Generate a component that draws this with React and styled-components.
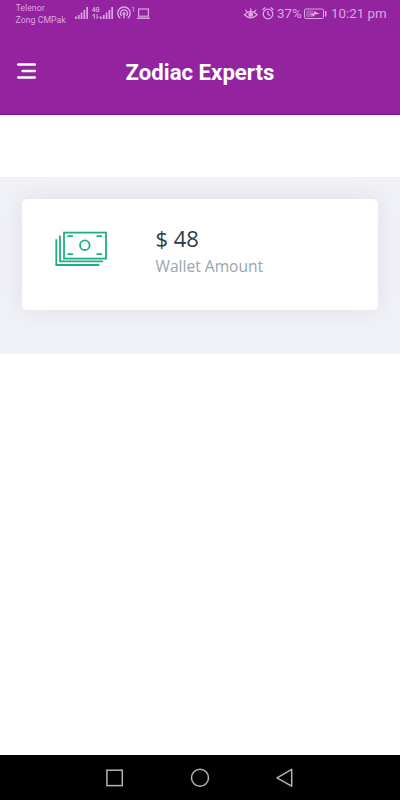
import React from 'react';
import styled, { createGlobalStyle } from 'styled-components';

const GlobalStyle = createGlobalStyle`
  * { box-sizing: border-box; }
  body { margin: 0; background: #fff; }
`;

const Screen = styled.div`
  display: flex;
  flex-direction: column;
  width: 400px;
  height: 800px;
  overflow: hidden;
  background: #fff;
  font-family: Roboto, sans-serif;
`;

const TopArea = styled.header`
  height: 115px;
  flex: none;
  background: #93239f;
  border-bottom: 1px solid #7c1488;
`;

const StatusBar = styled.div`
  display: flex;
  align-items: flex-start;
  justify-content: space-between;
  height: 28px;
  padding: 0 14px 0 15px;
  color: #dda5e3;
`;

const StatusGroup = styled.div`
  display: flex;
  align-items: flex-start;
`;

const Carriers = styled.div`
  width: 60px;
  padding: 2px 0 0 0.5px;
  font-size: 8.8px;
  line-height: 12px;
  white-space: nowrap;
`;

const StatusIcon = styled.svg`
  display: block;
  flex: none;
  width: ${(p) => p.$w}px;
  height: 28px;
  margin-right: ${(p) => p.$gap || 0}px;
  overflow: visible;
`;

const StatusText = styled.span`
  width: ${(p) => p.$w}px;
  margin-right: ${(p) => p.$gap || 0}px;
  font-size: 13.3px;
  line-height: 28px;
  white-space: nowrap;
`;

const NetworkType = styled.div`
  display: flex;
  flex-direction: column;
  width: 8px;
  height: 28px;
  padding-top: 6px;
  font-size: 7.5px;
  font-weight: 700;
  line-height: 7px;
`;

const NetworkLabel = styled.span`
  transform: scaleX(0.8);
  transform-origin: left;
`;

const Superscript = styled.span`
  width: 6px;
  padding-top: 6px;
  font-size: 8px;
  line-height: 8px;
`;

const AppBar = styled.div`
  display: grid;
  grid-template-columns: 60px 1fr 60px;
  align-items: center;
  height: 88px;
`;

const MenuButton = styled.button`
  display: flex;
  flex-direction: column;
  align-items: flex-end;
  width: 19px;
  margin: 0 0 2px 17px;
  padding: 0;
  border: 0;
  background: none;
`;

const MenuLines = styled.svg`
  display: block;
  width: 19px;
  height: 16px;
  fill: none;
  stroke: #fff;
  stroke-width: 2.5;
  stroke-linecap: round;
`;

const Title = styled.h1`
  margin: 0;
  color: #fff;
  text-align: center;
  font-size: 22.2px;
  font-weight: 700;
  line-height: 28px;
`;

const Content = styled.main`
  flex: 1;
  padding-top: 62px;
`;

const WalletSection = styled.section`
  height: 177px;
  padding: 22px;
  background: #f0f1f6;
  overflow: hidden;
`;

const Card = styled.article`
  display: flex;
  height: 111px;
  padding: 24px 33px;
  border-radius: 5px;
  background: #fff;
  box-shadow: 0 0 20px rgba(70, 60, 80, 0.09);
`;

const MoneyIcon = styled.svg`
  width: 52px;
  height: 36px;
  flex: none;
  margin: 8px 48.5px 0 0;
`;

const WalletInfo = styled.div`
  font-family: 'Open Sans', sans-serif;
`;

const Amount = styled.div`
  color: #2b3d4b;
  font-size: 22px;
  line-height: 31px;
`;

const Label = styled.div`
  color: #98a6ad;
  font-size: 15.6px;
  line-height: 24px;
`;

const NavBar = styled.nav`
  display: flex;
  align-items: center;
  justify-content: space-between;
  height: 45px;
  padding: 0 105px;
  background: #000;
`;

const NavIcon = styled.svg`
  width: 20px;
  height: 20px;
  fill: none;
  stroke: #b5b5b5;
  stroke-width: 1.5;
`;

function Signal({ gap }) {
  return (
    <StatusIcon $w={13} $gap={gap} viewBox="0 0 13 28" fill="currentColor">
      <path d="M0 16.5h1.7V19H0zM2.9 15h1.7v4H2.9zM5.7 12.5h1.7V19H5.7zM8.5 10h1.7v9H8.5zM11.3 7H13v12h-1.7z" />
    </StatusIcon>
  );
}

export default function App() {
  return (
    <>
      <GlobalStyle />
      <Screen>
        <TopArea>
          <StatusBar>
            <StatusGroup>
              <Carriers>
                <div>Telenor</div>
                <div>Zong CMPak</div>
              </Carriers>
              <Signal gap={4} />
              <NetworkType>
                <NetworkLabel>4G</NetworkLabel>
                <svg width="8" height="6" viewBox="0 0 8 6" fill="none" stroke="currentColor">
                  <path d="M2.3 5.5V1L.5 3M5 1v4.5L7 3.5" />
                </svg>
              </NetworkType>
              <Signal gap={4} />
              <StatusIcon $w={14} viewBox="0 0 14 28" fill="none" stroke="currentColor" strokeWidth="1.4">
                <path d="M3.3 18.2a6.2 6.2 0 1 1 7.4 0M4.7 16a3.5 3.5 0 1 1 4.6 0" />
                <circle cx="7" cy="13.5" r="1.5" fill="currentColor" stroke="none" />
                <path d="M7 14v4.5" />
              </StatusIcon>
              <Superscript>1</Superscript>
              <StatusIcon $w={13} viewBox="0 0 13 28" fill="none" stroke="currentColor" strokeWidth="1.2">
                <rect x="1.6" y="9" width="9.8" height="7.2" />
                <path d="M0 18.2h13" strokeWidth="1.5" />
              </StatusIcon>
            </StatusGroup>
            <StatusGroup>
              <StatusIcon $w={14} $gap={4} viewBox="0 0 14 28" fill="none" stroke="currentColor" strokeWidth="1.3">
                <path d="M1.5 14.7Q7.7 8 14 14.7Q7.7 21 1.5 14.7ZM7.7 8.5V11M2.4 9.8l1.8 2.1M13.1 9.8l-1.8 2.1" />
                <circle cx="7.7" cy="14.5" r="2.4" fill="currentColor" stroke="none" />
              </StatusIcon>
              <StatusIcon $w={12} $gap={4} viewBox="0 0 12 28" fill="none" stroke="currentColor" strokeWidth="1.3">
                <circle cx="7" cy="14" r="4.8" />
                <path d="M7 11v3.2l2.2 1.5M1.5 10l2.8-2.5M12.5 10L9.7 7.5" />
              </StatusIcon>
              <StatusText $w={24} $gap={3}>37%</StatusText>
              <StatusIcon $w={22} $gap={5} viewBox="0 0 22 28" fill="none" stroke="currentColor">
                <rect x=".5" y="9" width="19" height="9.5" rx="1.2" />
                <path d="M2 10.5h7v6.5H2z" fill="currentColor" fillOpacity=".4" stroke="none" />
                <path d="M6 14l4-.8-.2-2.2 6 2.8-5 .8-.8 2z" fill="currentColor" stroke="none" />
                <path d="M21.7 11v5.5" strokeWidth="1.4" />
              </StatusIcon>
              <StatusText $w={55}>10:21 pm</StatusText>
            </StatusGroup>
          </StatusBar>
          <AppBar>
            <MenuButton aria-label="Menu">
              <MenuLines viewBox="0 0 19 16">
                <path d="M1.2 1.6h16.6M5.6 8h12.2M1.2 14.4h16.6" />
              </MenuLines>
            </MenuButton>
            <Title>Zodiac Experts</Title>
          </AppBar>
        </TopArea>
        <Content>
          <WalletSection>
            <Card>
              <MoneyIcon viewBox="0 0 52 36" fill="none" stroke="#20ae87" strokeWidth="1.8">
                <rect x="9" y="1.6" width="42" height="26" />
                <circle cx="29.8" cy="14.2" r="4.8" />
                <path d="M12.5 5.2h5.5M41.5 5.2H47M12.5 23.2h5.5M41.5 23.2H47M5 4.5v25.8h43M1.3 8.3V34h43" />
              </MoneyIcon>
              <WalletInfo>
                <Amount>$ 48</Amount>
                <Label>Wallet Amount</Label>
              </WalletInfo>
            </Card>
          </WalletSection>
        </Content>
        <NavBar>
          <NavIcon viewBox="0 0 20 20"><rect x="1.9" y="2.2" width="15.4" height="15.4" /></NavIcon>
          <NavIcon viewBox="0 0 20 20"><circle cx="10" cy="9.8" r="8.5" /></NavIcon>
          <NavIcon viewBox="0 0 20 20"><path d="M2 9.8L16.7 1.4v16.8z" strokeLinejoin="round" /></NavIcon>
        </NavBar>
      </Screen>
    </>
  );
}
